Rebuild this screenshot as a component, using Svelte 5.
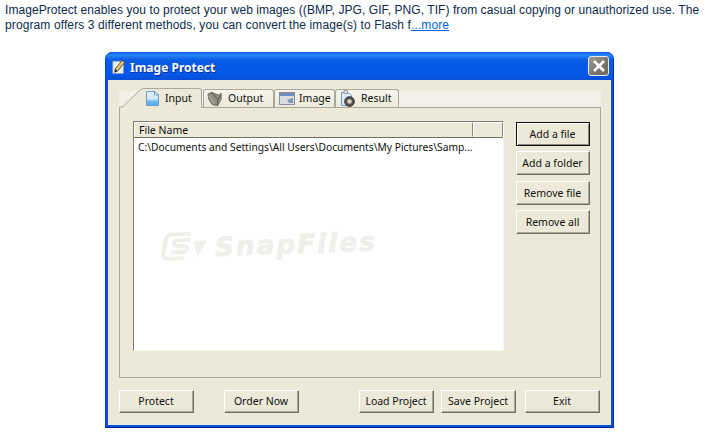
<script>
  const side = ['Add a file', 'Add a folder', 'Remove file', 'Remove all'];
</script>

<div class="page">
  <p class="intro">ImageProtect enables you to protect your web images ((BMP, JPG, GIF, PNG, TIF) from casual copying or unauthorized use. The<br /><span class="l2">program offers 3 different methods, you can convert the image(s) to Flash f<a href="#more">...more</a></span></p>

  <div class="window">
    <div class="titlebar">
      <svg class="appicon" width="13" height="15" viewBox="0 0 16 18">
        <rect x="1" y="2.5" width="13" height="15" fill="#e6eef8" stroke="#8fa0b8"/>
        <path d="M4 12 L12.5 1.5 L15.5 4 L7 14.5 L3.5 16 Z" fill="#e8c668" stroke="#4a3f2c"/>
        <path d="M3.5 16 L4 12 L7 14.5 Z" fill="#222"/>
      </svg>
      <span class="title">Image Protect</span>
      <span class="close">
        <svg width="14" height="14" viewBox="0 0 14 14"><path d="M2 2 L12 12 M12 2 L2 12" stroke="#fff" stroke-width="2.8"/></svg>
      </span>
    </div>

    <div class="client">
      <div class="tabstrip">
        <div class="tab active">
          <svg class="slant" width="27" height="20" viewBox="0 0 27 20"><path d="M0 20 V19 L4 18.5 L21.5 1.5 Q23 .5 26 .5 L27 .5 L27 20 Z" fill="#ece9d8"/><path d="M0 19.5 L4 18.5 L21.5 1.5 Q23 .5 26 .5 L27 .5" fill="none" stroke="#aca899"/></svg>
          <svg class="ti" width="13" height="15" viewBox="0 0 13 15">
            <defs><linearGradient id="doc" x1="0" y1="0" x2="0" y2="1"><stop offset="0" stop-color="#e4f2fd"/><stop offset=".55" stop-color="#cfe6fa"/><stop offset=".7" stop-color="#6dbcf0"/><stop offset="1" stop-color="#55aee8"/></linearGradient></defs>
            <path d="M.5 .5 H8.5 L12.5 4 V14.5 H.5 Z" fill="url(#doc)" stroke="#6d9dcc"/>
            <path d="M8.5 .5 V4 H12.5 Z" fill="#fff" stroke="#6d9dcc"/>
          </svg>
          <span>Input</span>
        </div>
        <div class="tab t2">
          <svg class="ti" width="16" height="16" viewBox="0 0 18 17">
            <path d="M1 3 L5 1 L13 4 L16 2 L16 9 L12 16 L6 15 L2 9 Z" fill="#8f8c80" stroke="#5b5a50" stroke-width=".8"/>
            <path d="M5 1 L12 9 L12 16 M12 9 L16 4" fill="none" stroke="#55544b"/>
            <path d="M2 5 L8 13" stroke="#c4c1b2"/>
          </svg>
          <span class="lift">Output</span>
        </div>
        <div class="tab t3">
          <svg class="ti" width="16" height="13" viewBox="0 0 16 13">
            <rect x=".5" y=".5" width="15" height="12" fill="#d9dde0" stroke="#8a8f96"/>
            <rect x="1" y="1" width="14" height="3" fill="#6d8fc0"/>
            <path d="M8 8 L14 6 V11 H10 Z" fill="#7f97b8"/>
          </svg>
          <span class="lift">Image</span>
        </div>
        <div class="tab t4">
          <svg class="ti" width="15" height="17" viewBox="0 0 15 17">
            <path d="M1.5 2.5 H8.5 L11.5 5.5 V15.5 H1.5 Z" fill="#dfeaf5" stroke="#6f9ac8"/>
            <path d="M4 .5 H7.5 V3.5 H4 Z" fill="#e0e0d8" stroke="#777" stroke-width=".6"/>
            <circle cx="9.5" cy="11.5" r="4.8" fill="#55534c" stroke="#2d2c28"/>
            <circle cx="9.5" cy="11.5" r="2.3" fill="#d8d6c8"/>
          </svg>
          <span class="lift">Result</span>
        </div>
      </div>

      <div class="panel">
        <div class="listrow">
          <div class="list">
            <div class="head">
              <div class="col c1">File Name</div>
              <div class="col c2"></div>
            </div>
            <div class="row">C:\Documents and Settings\All Users\Documents\My Pictures\Samp...</div>
            <div class="mark" aria-hidden="true">
              <svg width="48" height="30" viewBox="0 0 48 30">
                <g fill="none" stroke="#efefeb" stroke-width="4">
                  <path d="M31 3 H12 Q7 3 6 8 L3 22 Q2 27 7 27 H24"/>
                  <path d="M31 9 H18 Q14 9 14 12 Q14 14.5 18 15 H25 Q28 15 27 18 Q26 21 22 21 H11"/>
                </g>
                <path d="M34 11 L47 10 L37 27 Z" fill="#efefeb"/>
              </svg>
              <span>SnapFiles</span>
            </div>
          </div>
          <div class="sidebtns">
            {#each side as b, i}
              <button class="btn side" class:def={i === 0}>{b}</button>
            {/each}
          </div>
        </div>
      </div>

      <div class="bottom">
        <button class="btn b1">Protect</button>
        <button class="btn b2">Order Now</button>
        <button class="btn b3">Load Project</button>
        <button class="btn b4">Save Project</button>
        <button class="btn b5">Exit</button>
      </div>
    </div>
  </div>
</div>

<style>
  :global(body) { margin: 0; background: #fff; }
  .page { width: 705px; height: 433px; overflow: hidden; position: relative; }
  .intro {
    margin: 0; padding: 3px 0 0 5px; height: 52px; box-sizing: border-box;
    font: 12px/15px "Liberation Sans", Arial, sans-serif; color: #0c2a4a; white-space: nowrap;
    letter-spacing: .07px;
  }
  .l2 { letter-spacing: .11px; }
  .intro a { color: #0066dd; text-decoration: underline; }
  .window {
    margin-left: 105px; width: 509px; height: 376px; box-sizing: border-box;
    background: #0a50dc; border-radius: 7px 7px 0 0;
    border-left: 1px solid #0a3fc8; border-right: 1px solid #0a2fa8; border-bottom: 1px solid #00169c;
    display: flex; flex-direction: column; overflow: hidden;
  }
  .titlebar {
    height: 28px; flex: none; display: flex; align-items: center; padding: 0 4px 0 6px; box-sizing: border-box;
    background: linear-gradient(#0a58e8 0, #2a86f8 3px, #0a5ce4 8px, #0558e8 22px, #0a4ed8 28px);
  }
  .appicon { margin-right: 5px; }
  .title {
    font: bold 12px "Noto Sans", "Open Sans", sans-serif; color: #fff; padding-top: 2px;
    text-shadow: 1px 1px 0 #0a2f90; flex: 1;
  }
  .close {
    width: 19px; height: 18px; border: 1px solid #e8e8f0; border-radius: 3px;
    background: linear-gradient(135deg, #a09d90, #75726a 60%, #6d6a60);
    display: flex; align-items: center; justify-content: center; box-sizing: content-box;
  }
  .client {
    flex: 1; margin: 0 2px 2px; background: #ece9d8; padding: 8px 10px 0 11px;
    font: 10.5px "Noto Sans", "Open Sans", sans-serif; color: #111; display: flex; flex-direction: column;
  }
  .tabstrip {
    height: 19px; flex: none; display: flex; align-items: flex-end; position: relative;
    background: linear-gradient(#ece9d8 0, #ece9d8 3px, #f3f1e8 3px, #f1efe5 100%);
  }
  .tab {
    height: 18px; box-sizing: border-box; display: flex; align-items: center; gap: 4px; flex: none;
    border: 1px solid #aca899; border-bottom: none; border-radius: 3px 3px 0 0;
    background: linear-gradient(#f6f5ee, #ece9d8); position: relative; font-size: 10.5px;
  }
  .lift { padding-bottom: 2px; }
  .tab.active {
    width: 83px; height: 20px; margin-bottom: -1px; border-left: none; padding-left: 27px; gap: 6px;
    border-right-color: #aca899; background: transparent; z-index: 2; border-top: none; border-radius: 0 3px 0 0;
  }
  .active::before {
    content: ""; position: absolute; left: 26px; right: 0; top: 0; bottom: 0; background: #ece9d8;
    border-top: 1px solid #aca899; border-radius: 0 3px 0 0;
  }
  .active > .ti, .active > span { position: relative; z-index: 1; }
  .slant { position: absolute; left: 0; top: 0; }
  .t2 { width: 71px; padding-left: 3px; margin-left: 1px; gap: 5px; }
  .t3 { width: 61px; padding-left: 4px; }
  .t4 { width: 64px; padding-left: 4px; gap: 6px; }
  .panel {
    height: 271px; box-sizing: border-box; flex: none;
    border: 1px solid #aca899; background: #ece9d8; padding: 13px 10px 0 13px;
  }
  .listrow { display: flex; gap: 12px; align-items: flex-start; }
  .list {
    width: 371px; height: 230px; box-sizing: border-box; background: #fff; position: relative; flex: none;
    border: 1px solid; border-color: #7f7d72 #f8f7f0 #f8f7f0 #7f7d72; overflow: hidden;
  }
  .head { display: flex; height: 16px; box-sizing: border-box; border-bottom: 1px solid #716f64; }
  .col { box-sizing: border-box; height: 15px; background: #ece9d8; border: 1px solid; border-color: #fff #8d8b7e #ece9d8 #fff; padding-left: 4px; line-height: 15px; }
  .c1 { width: 339px; }
  .c2 { flex: 1; }
  .row { padding: 1px 0 0 4px; line-height: 17px; white-space: nowrap; font-size: 10.25px; }
  .mark {
    position: absolute; left: 26px; top: 108px; display: flex; align-items: center; gap: 7px;
    transform: rotate(-2deg); transform-origin: left center;
  }
  .mark span {
    font: italic bold 26px "DejaVu Sans", sans-serif; color: #efefeb; letter-spacing: 2.2px;
    -webkit-text-stroke: .8px #efefeb; white-space: nowrap; padding-top: 4px;
  }
  .sidebtns { display: flex; flex-direction: column; align-items: stretch; width: 74px; flex: none; margin-top: 1px; }
  .btn {
    font: 10.5px "Noto Sans", "Open Sans", sans-serif; color: #111; background: #ece9d8; padding: 0 1px 2px 0; margin: 0;
    border: 1px solid; border-color: #fff #716f64 #716f64 #fff; box-shadow: inset -1px -1px 0 #aca899;
    box-sizing: border-box; flex: none;
  }
  .side { height: 24px; margin-bottom: 5px; padding-bottom: 1px; }
  .side:nth-child(2) { margin-bottom: 6px; }
  .def { border-color: #111; box-shadow: inset 1px 1px 0 #fff, inset -1px -1px 0 #8d8b7e; }
  .bottom { display: flex; margin-top: 12px; align-items: flex-start; }
  .bottom .btn { height: 23px; width: 75px; }
  .b2 { margin-left: 30px; }
  .b3 { margin-left: 60px; }
  .b4 { margin-left: 7px; }
  .b5 { margin-left: 9px; }
</style>
